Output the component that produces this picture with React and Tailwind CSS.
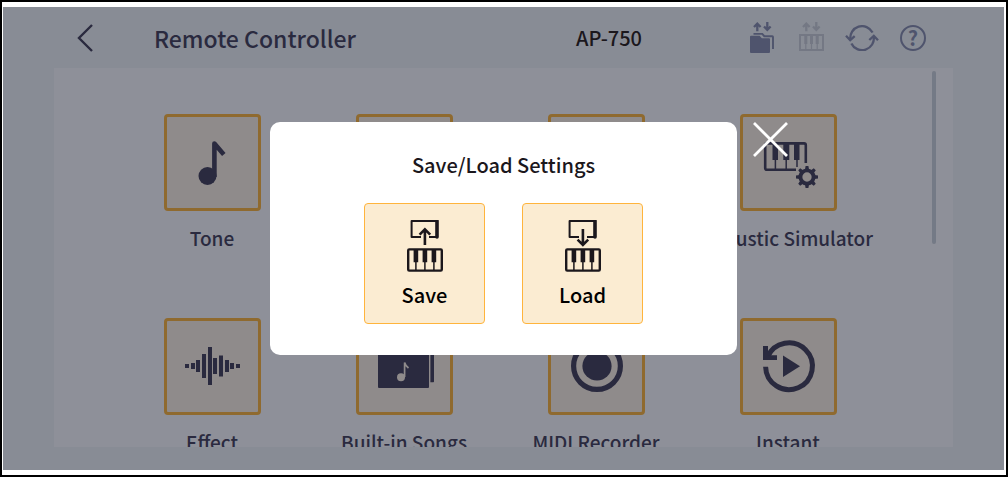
import { useState } from 'react';

const features = [
  { id: 'tone', label: 'Tone', icon: NoteIcon },
  { id: 'split', name: 'Split' },
  { id: 'layer', name: 'Layer' },
  { id: 'acoustic', label: 'Acoustic Simulator', icon: PianoGearIcon },
  { id: 'effect', label: 'Effect', icon: WaveIcon },
  { id: 'songs', label: 'Built-in Songs', icon: SongsIcon },
  { id: 'midi', label: 'MIDI Recorder', icon: RecordIcon },
  { id: 'instant', label: 'Instant', icon: ReplayIcon },
];

// height of each bar in the Effect wave, with its left edge
const waveBars = [
  [18, 4], [24, 6], [29, 12], [35, 24], [41, 38],
  [46, 16], [52, 21], [58, 12], [63, 6], [69, 4],
];

function NoteIcon() {
  return (
    <>
      <circle cx="40.5" cy="59" r="9" fill="currentColor" />
      <path d="M47.4 60V26.5L56.8 37.5" fill="none" stroke="currentColor" strokeWidth="4.6" strokeLinejoin="round" />
    </>
  );
}

function PianoGearIcon() {
  return (
    <>
      <path d="M53 52.8H24Q22.2 52.8 22.2 51V28.2Q22.2 26.4 24 26.4H61Q62.8 26.4 62.8 28.2V46" fill="none" stroke="currentColor" strokeWidth="2.6" />
      <path d="M29.5 26h5.5v17h-5.5zM40.3 26h6v17h-6zM51 26h5.5v17h-5.5z" fill="currentColor" />
      <path d="M32.4 42v11M43.2 42v11M54 42v8" stroke="currentColor" strokeWidth="1.5" />
      <circle cx="64" cy="60" r="6.6" fill="none" stroke="currentColor" strokeWidth="3.9" />
      {[0, 45, 90, 135, 180, 225, 270, 315].map((deg) => (
        <path key={deg} d="M61.9 52.8L62.6 49h2.8l.7 3.8z" fill="currentColor" transform={`rotate(${deg} 64 60)`} />
      ))}
    </>
  );
}

function WaveIcon() {
  return waveBars.map(([x, h]) => (
    <rect key={x} x={x} y={45 - h / 2} width="4" height={h} fill="currentColor" />
  ));
}

function SongsIcon() {
  return (
    <>
      <rect x="19" y="26" width="51" height="41" rx="1" fill="currentColor" />
      <path d="M71.4 23h3.6v37.5q0 .7-.7.7h-2.9z" fill="currentColor" />
      <circle cx="42" cy="56.3" r="4" fill="#8f8b8b" />
      <path d="M45.6 56V41.5Q46.3 44.5 49.5 47" fill="none" stroke="#8f8b8b" strokeWidth="1.7" />
    </>
  );
}

function RecordIcon() {
  return (
    <>
      <circle cx="46" cy="45" r="23.4" fill="none" stroke="currentColor" strokeWidth="5.2" />
      <circle cx="46" cy="45" r="14.6" fill="currentColor" />
    </>
  );
}

function ReplayIcon() {
  return (
    <>
      <path d="M22.6 45.8A23.4 23.4 0 1 0 24.5 36" fill="none" stroke="currentColor" strokeWidth="5" />
      <path d="M20 25h5v9.3h9V39H20z" fill="currentColor" />
      <path d="M40 34.6L57 45.3L40 56z" fill="currentColor" />
    </>
  );
}

function FolderTransferIcon() {
  return (
    <svg viewBox="0 0 24 31" className="w-6 h-[31px]" fill="none" stroke="currentColor" aria-hidden="true">
      <path d="M7.3 9.3V1.5M4 5L7.3 1.7L10.6 5M17.3 0V7.8M14 4.5L17.3 7.8L20.6 4.5" strokeWidth="2.3" />
      <path d="M3.5 11.9H12.3L14.3 14.2H22.2Q23 14.2 23 15V27" strokeWidth="1.9" />
      <path d="M0 14.8Q0 13.8 1 13.8H9.6L11.8 16.3H19Q20 16.3 20 17.3V30Q20 31 19 31H1Q0 31 0 30z" fill="currentColor" stroke="none" />
    </svg>
  );
}

function PianoTransferIcon() {
  return (
    <svg viewBox="0 0 25 31" className="w-[25px] h-[31px]" fill="none" stroke="currentColor" aria-hidden="true">
      <path d="M7.3 9.3V1.5M4 5L7.3 1.7L10.6 5M17.3 0V7.8M14 4.5L17.3 7.8L20.6 4.5" strokeWidth="2.3" />
      <rect x="1" y="13" width="23" height="15" strokeWidth="2" />
      <path d="M6.8 13v9M12.5 13v9M18.2 13v9" strokeWidth="3" />
      <path d="M6.8 21v7M12.5 21v7M18.2 21v7" strokeWidth="1.2" />
    </svg>
  );
}

function SyncIcon() {
  return (
    <svg viewBox="0 0 34 26" className="w-[34px] h-[26px]" fill="none" stroke="currentColor" strokeWidth="2.3" aria-hidden="true">
      <path d="M5.4 14.6A11.8 11.8 0 0 1 27.6 7.6" />
      <path d="M1 10.7L5.2 15.2L9.7 11.2" />
      <path d="M6.4 18.4A11.8 11.8 0 0 0 28.7 11.4" />
      <path d="M24.3 15L28.8 10.8L33 15.3" />
    </svg>
  );
}

function TransferIcon({ up }) {
  return (
    <svg viewBox="0 0 36 52" className="w-9 h-[52px]" fill="none" stroke="currentColor" aria-hidden="true">
      <path d="M14 17H4.6V1H30V17H22" strokeWidth="2" strokeLinejoin="round" />
      <path d="M30 1V17" strokeWidth="3.6" strokeLinecap="round" />
      {up ? (
        <path d="M17.9 25V10M12.6 14.6L17.9 9.3L23.2 14.6" strokeWidth="2.6" />
      ) : (
        <path d="M17.9 9V24M12.6 19.6L17.9 24.9L23.2 19.6" strokeWidth="2.6" />
      )}
      <rect x="1.2" y="29.4" width="33.6" height="21.2" rx="1" strokeWidth="2.4" />
      <path d="M8.9 29v13.3M17.9 29v13.3M26.9 29v13.3" strokeWidth="4.6" />
      <path d="M8.9 42v9M17.9 42v9M26.9 42v9" strokeWidth="1.5" />
    </svg>
  );
}

function FeatureTile({ feature }) {
  const Icon = feature.icon;
  return (
    <div className="flex flex-col items-center">
      <button
        type="button"
        aria-label={feature.label || feature.name}
        className="w-[97px] h-[97px] rounded border-3 border-[#8f6a2f] bg-[#8f8b8b]"
      >
        {Icon && (
          <svg viewBox="0 0 91 91" className="w-full h-full" aria-hidden="true">
            <Icon />
          </svg>
        )}
      </button>
      {feature.label && (
        <span className="mt-[15px] text-[19px] leading-6 font-medium whitespace-nowrap">{feature.label}</span>
      )}
    </div>
  );
}

function SettingsDialog({ onClose }) {
  return (
    <div className="absolute inset-0 flex items-center justify-center">
      <div role="dialog" aria-labelledby="settings-title" className="relative rounded-[10px] bg-white px-[94px] py-[31px]">
        <h2 id="settings-title" className="mb-[26px] text-center text-xl leading-6 font-medium text-[#1b171c]">
          Save/Load Settings
        </h2>
        <div className="flex gap-[37px]">
          <button type="button" className="flex w-[121px] h-[121px] flex-col items-center rounded-sm border border-[#ffb43c] bg-[#fbecd2] pt-4 text-[#1b171c]">
            <TransferIcon up />
            <span className="mt-[11px] text-xl leading-6 font-medium text-black">Save</span>
          </button>
          <button type="button" className="flex w-[121px] h-[121px] flex-col items-center rounded-sm border border-[#ffb43c] bg-[#fbecd2] pt-4 text-[#1b171c]">
            <TransferIcon />
            <span className="mt-[11px] text-xl leading-6 font-medium text-black">Load</span>
          </button>
        </div>
        {/* Close sits outside the card, at its top right corner */}
        <button type="button" aria-label="Close" onClick={onClose} className="absolute top-0 left-full ml-4 text-white">
          <svg viewBox="0 0 35 35" className="w-[35px] h-[35px]" stroke="currentColor" strokeWidth="2.8" aria-hidden="true">
            <path d="M1 1L34 34M34 1L1 34" />
          </svg>
        </button>
      </div>
    </div>
  );
}

export default function App() {
  const [dialogOpen, setDialogOpen] = useState(true);

  return (
    <div className="h-screen border-2 border-black bg-white pt-[5px] pr-[2px] pb-[5px] pl-px font-['Noto_Sans_CJK_JP',sans-serif]">
      <div className="relative flex h-full flex-col overflow-hidden bg-[#888c95] px-[51px] pb-[23px] text-[#2a2a3f]">
        <header className="flex h-[61px] shrink-0 items-center pr-[27px] pl-[22px]">
          <button type="button" aria-label="Back">
            <svg viewBox="0 0 18 28" className="w-[18px] h-7" fill="none" stroke="currentColor" strokeWidth="2.4" aria-hidden="true">
              <path d="M16 1L3 14L16 27" />
            </svg>
          </button>
          <h1 className="ml-[60px] text-[23px] leading-8 font-medium">Remote Controller</h1>
          <span className="ml-auto text-xl font-medium text-[#1b171c]">AP-750</span>
          <div className="ml-[108px] flex items-center gap-[21px] text-[#4f546d]">
            <button type="button" aria-label="Manage files" onClick={() => setDialogOpen(true)}>
              <FolderTransferIcon />
            </button>
            <button type="button" aria-label="Save or load settings" className="ml-1 text-[#747884]" onClick={() => setDialogOpen(true)}>
              <PianoTransferIcon />
            </button>
            <button type="button" aria-label="Sync">
              <SyncIcon />
            </button>
            <button type="button" aria-label="Help" className="flex h-[26px] w-[26px] items-center justify-center rounded-full border-2 border-current text-xl leading-none font-bold">
              ?
            </button>
          </div>
        </header>

        <main className="flex min-h-0 flex-1 overflow-hidden bg-[#8e9099]">
          <div className="grid flex-1 grid-cols-4 content-start gap-y-[68px] pt-[46px] pr-12 pl-[62px]">
            {features.map((f) => (
              <FeatureTile key={f.id} feature={f} />
            ))}
          </div>
          <div className="mt-[3px] mr-[17px] h-[173px] w-1 shrink-0 rounded-full bg-[#747a86]" />
        </main>

        {dialogOpen && <SettingsDialog onClose={() => setDialogOpen(false)} />}
      </div>
    </div>
  );
}
